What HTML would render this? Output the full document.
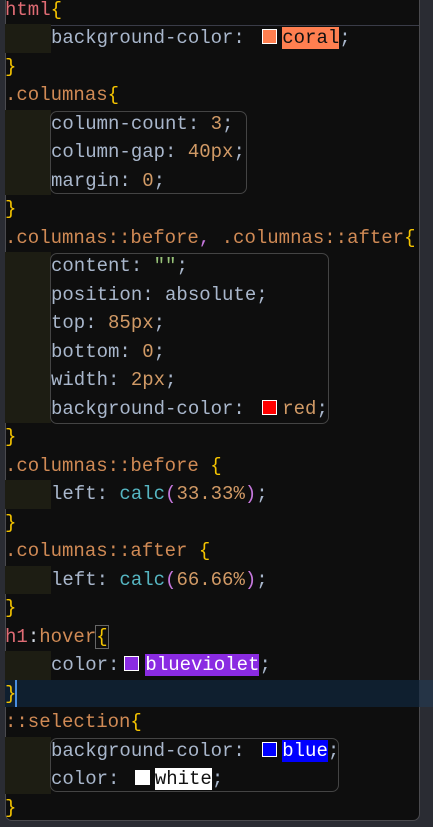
<!DOCTYPE html>
<html><head><style>
body{margin:0;width:433px;height:827px;background:#2a2c33;overflow:hidden;position:relative;font-family:"Liberation Mono",monospace;font-size:19px;}
#ed{position:absolute;left:5px;top:-10px;width:413px;height:829px;background:#0e0e0e;border:1px solid #4a4a4e;border-radius:0 0 7px 7px;border-top-right-radius:7px;}
.l{position:absolute;left:5px;height:28.5px;line-height:28.5px;white-space:pre;color:#a9b7cc;}
.ind{position:absolute;left:5px;width:46px;height:28.5px;background:#1d1d13;}
.s{color:#d08a55}.r{color:#e06c75}.b{color:#f5c400}.n{color:#d19a66}.g{color:#98c379}.c{color:#56b6c2}.p{color:#c678dd}.w{color:#cfd6e0}
.sw{display:inline-block;width:13px;height:13px;border:1.5px solid #fff;vertical-align:-1px;}
.box{position:absolute;border:1px solid #444;border-radius:7px;}
</style></head><body>
<div id="ed"></div>
<div style="position:absolute;left:6px;top:25px;width:413px;height:1px;background:#3a3c48"></div>
<div style="position:absolute;left:5px;top:680px;width:414px;height:27px;background:#0f1f2f"></div>
<div style="position:absolute;left:419px;top:680px;width:14px;height:27px;background:#253446"></div>
<div style="position:absolute;left:15px;top:680px;width:2px;height:27px;background:#4a8ee0"></div>

<div class="ind" style="top:24px"></div>
<div class="ind" style="top:109.5px;height:85.5px"></div>
<div class="ind" style="top:252px;height:171px"></div>
<div class="ind" style="top:480px"></div>
<div class="ind" style="top:565.5px"></div>
<div class="ind" style="top:651px"></div>
<div class="ind" style="top:736.5px;height:57px"></div>

<div class="box" style="left:50px;top:111px;width:195px;height:81px"></div>
<div class="box" style="left:50px;top:253px;width:277px;height:169px"></div>
<div class="box" style="left:50px;top:738px;width:287px;height:52px"></div>

<div class="l" style="top:-4.5px"><span class="r">html</span><span class="b">{</span></div>
<div class="l" style="top:24px;left:51px">background-color: <span class="sw" style="background:#ff7f50;margin:0 5px 0 6px"></span><span style="background:#ff7f50;color:#111">coral</span>;</div>
<div class="l b" style="top:52.5px">}</div>
<div class="l" style="top:81px"><span class="s">.columnas</span><span class="b">{</span></div>
<div class="l" style="top:109.5px;left:51px">column-count: <span class="n">3</span>;</div>
<div class="l" style="top:138px;left:51px">column-gap: <span class="n">40px</span>;</div>
<div class="l" style="top:166.5px;left:51px">margin: <span class="n">0</span>;</div>
<div class="l b" style="top:195px">}</div>
<div class="l" style="top:223.5px"><span class="s">.columnas::before</span><span class="p">,</span> <span class="s">.columnas::after</span><span class="b">{</span></div>
<div class="l" style="top:252px;left:51px">content: <span class="g">""</span>;</div>
<div class="l" style="top:280.5px;left:51px">position: absolute;</div>
<div class="l" style="top:309px;left:51px">top: <span class="n">85px</span>;</div>
<div class="l" style="top:337.5px;left:51px">bottom: <span class="n">0</span>;</div>
<div class="l" style="top:366px;left:51px">width: <span class="n">2px</span>;</div>
<div class="l" style="top:394.5px;left:51px">background-color: <span class="sw" style="background:#f00;margin:0 5px 0 6px"></span><span class="n">red</span>;</div>
<div class="l b" style="top:423px">}</div>
<div class="l" style="top:451.5px"><span class="s">.columnas::before</span> <span class="b">{</span></div>
<div class="l" style="top:480px;left:51px">left: <span class="c">calc</span><span class="p">(</span><span class="n">33.33%</span><span class="p">)</span>;</div>
<div class="l b" style="top:508.5px">}</div>
<div class="l" style="top:537px"><span class="s">.columnas::after</span> <span class="b">{</span></div>
<div class="l" style="top:565.5px;left:51px">left: <span class="c">calc</span><span class="p">(</span><span class="n">66.66%</span><span class="p">)</span>;</div>
<div class="l b" style="top:594px">}</div>
<div class="l" style="top:622.5px"><span class="r">h1</span><span class="w">:</span><span class="s">hover</span><span class="b" style="outline:1px solid #666">{</span></div>
<div class="l" style="top:651px;left:51px">color:<span class="sw" style="background:#8a2be2;margin:0 6px 0 5px"></span><span style="background:#8a2be2;color:#fff">blueviolet</span>;</div>
<div class="l b" style="top:679.5px">}</div>
<div class="l" style="top:708px"><span class="s">::selection</span><span class="b">{</span></div>
<div class="l" style="top:736.5px;left:51px">background-color: <span class="sw" style="background:#00f;margin:0 5px 0 6px"></span><span style="background:#00f;color:#fff">blue</span>;</div>
<div class="l" style="top:765px;left:51px">color: <span class="sw" style="background:#fff;margin:0 5px 0 4px"></span><span style="background:#fff;color:#111">white</span>;</div>
<div class="l b" style="top:793.5px">}</div>
</body></html>
